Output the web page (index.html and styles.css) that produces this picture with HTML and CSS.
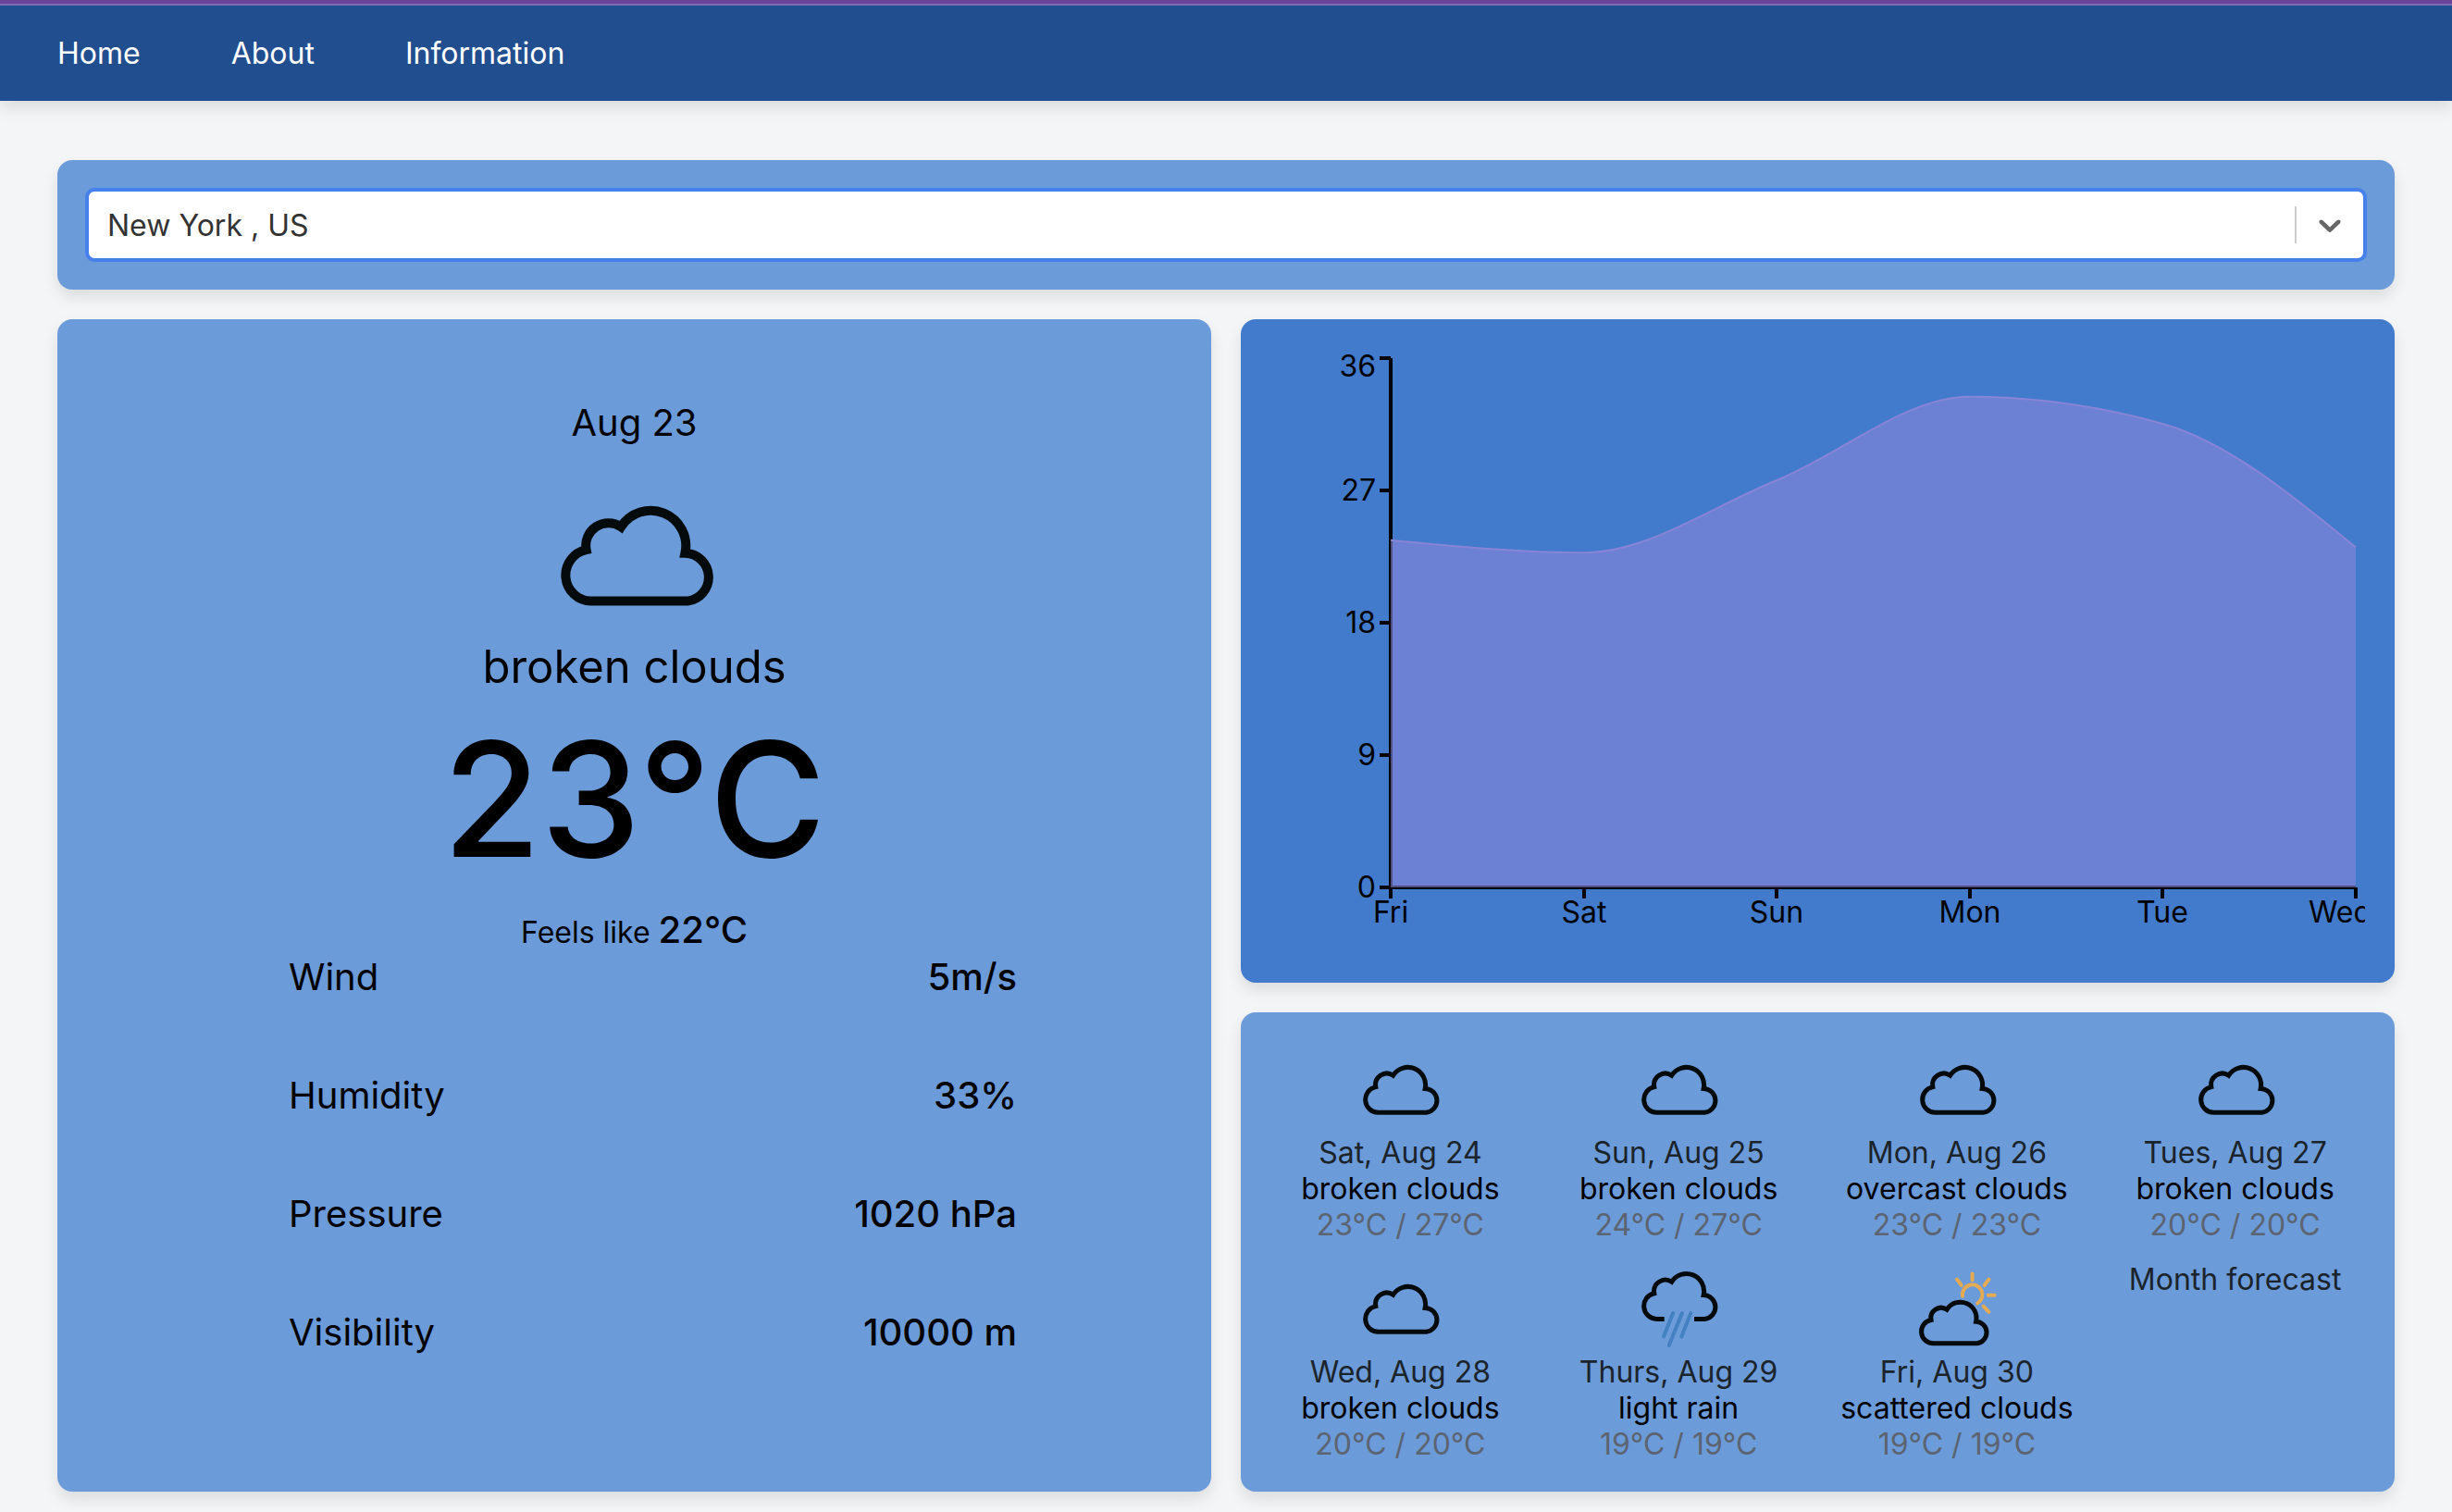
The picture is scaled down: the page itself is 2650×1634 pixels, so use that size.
FILE: index.html
```html
<!DOCTYPE html>
<html lang="en">
<head>
<meta charset="utf-8">
<title>Weather</title>
<meta name="viewport" content="width=device-width, initial-scale=1">
<link rel="stylesheet" href="styles.css">
</head>
<body>
<svg class="sprite" aria-hidden="true">
  <defs>
    <symbol id="icon-cloud" viewBox="0 0 100 100">
      <path class="cloud-line" d="M26.4 76.3A14 14 0 0 1 23.8 48.6A12.2 12.2 0 0 1 42.6 36.2A19 19 0 0 1 77.2 50.4A13 13 0 0 1 78.5 76.3Z"/>
    </symbol>
    <symbol id="icon-rain" viewBox="0 0 100 100">
      <path class="cloud-line" d="M34.7 62.4H26.4A14 14 0 0 1 23.8 34.7A12.2 12.2 0 0 1 42.6 22.3A19 19 0 0 1 77.2 36.5A13 13 0 0 1 78.5 62.4H67"/>
      <path class="rain-line" d="M44.1 56L34 81.5M53.9 56L39.7 91M63.3 56L53.3 81.5"/>
    </symbol>
    <symbol id="icon-cloud-sun" viewBox="0 0 100 100">
      <path class="sun-line" d="M56 37.8A10.8 10.8 0 1 1 72.2 45.4M66.6 13.5V20.2M50 19.6L54.7 25.8M84.4 19.6L79.6 26M83.8 36.8H90.6M78.6 48.6L84.4 54.8"/>
      <path class="cloud-line" d="M24.3 88.7A12.7 12.7 0 0 1 22 63.5A11.1 11.1 0 0 1 39.1 52.2A17.3 17.3 0 0 1 70.6 65.2A11.8 11.8 0 0 1 71.7 88.7Z"/>
    </symbol>
  </defs>
</svg>

<header class="topbar">
  <nav class="nav">
    <a href="#home">Home</a>
    <a href="#about">About</a>
    <a href="#information">Information</a>
  </nav>
</header>

<main class="dashboard">
  <section class="card search">
    <div class="picker">
      <select class="picker-select" aria-label="City">
        <option selected>New York , US</option>
      </select>
      <svg class="picker-arrow" viewBox="0 0 20 20" aria-hidden="true"><path d="M4.516 7.548c0.436-0.446 1.043-0.481 1.576 0l3.908 3.747 3.908-3.747c0.533-0.481 1.141-0.446 1.574 0 0.436 0.445 0.408 1.197 0 1.615-0.406 0.418-4.695 4.502-4.695 4.502-0.217 0.223-0.502 0.335-0.787 0.335s-0.57-0.112-0.789-0.335c0 0-4.287-4.084-4.695-4.502s-0.436-1.17 0-1.615z"/></svg>
    </div>
  </section>

  <section class="card today">
    <p class="today-date">Aug 23</p>
    <svg class="today-icon" aria-hidden="true"><use href="#icon-cloud"/></svg>
    <p class="today-desc">broken clouds</p>
    <p class="today-temp">23°C</p>
    <p class="today-feels">Feels like <strong>22°C</strong></p>
    <dl class="details">
      <div class="detail"><dt>Wind</dt><dd>5m/s</dd></div>
      <div class="detail"><dt>Humidity</dt><dd>33%</dd></div>
      <div class="detail"><dt>Pressure</dt><dd>1020 hPa</dd></div>
      <div class="detail"><dt>Visibility</dt><dd>10000 m</dd></div>
    </dl>
  </section>

  <div class="side">
    <section class="card chart-card">
      <svg class="chart" viewBox="0 0 1183 653" role="img" aria-label="Temperature by day">
        <path class="axis" d="M130 10V582M118 10H130M118 153H130M118 296H130M118 439H130M118 582H130"/>
        <path class="axis" d="M130 582H1173M130 582V594M339 582V594M547 582V594M756 582V594M964 582V594M1173 582V594"/>
        <path class="area" d="M130 206.7C199.5 213.5 269.1 220.3 338.6 220.3C408.1 220.3 477.7 170.1 547.2 142C616.7 113.9 686.3 51.7 755.8 51.7C825.3 51.7 894.9 61.5 964.4 81C1033.9 100.5 1103.5 157.5 1173 214.5V582H130Z"/>
        <path class="curve" d="M130 206.7C199.5 213.5 269.1 220.3 338.6 220.3C408.1 220.3 477.7 170.1 547.2 142C616.7 113.9 686.3 51.7 755.8 51.7C825.3 51.7 894.9 61.5 964.4 81C1033.9 100.5 1103.5 157.5 1173 214.5"/>
        <g class="ticks-y">
          <text x="114" y="30">36</text>
          <text x="114" y="164">27</text>
          <text x="114" y="307">18</text>
          <text x="114" y="450">9</text>
          <text x="114" y="593">0</text>
        </g>
        <g class="ticks-x">
          <text x="130" y="620">Fri</text>
          <text x="339" y="620">Sat</text>
          <text x="547" y="620">Sun</text>
          <text x="756" y="620">Mon</text>
          <text x="964" y="620">Tue</text>
          <text x="1156" y="620">Wed</text>
        </g>
      </svg>
    </section>

    <section class="card forecast">
      <article class="day">
        <svg class="day-icon" aria-hidden="true"><use href="#icon-cloud"/></svg>
        <p class="day-date">Sat, Aug 24</p><p>broken clouds</p><p class="day-temp">23°C / 27°C</p>
      </article>
      <article class="day">
        <svg class="day-icon" aria-hidden="true"><use href="#icon-cloud"/></svg>
        <p class="day-date">Sun, Aug 25</p><p>broken clouds</p><p class="day-temp">24°C / 27°C</p>
      </article>
      <article class="day">
        <svg class="day-icon" aria-hidden="true"><use href="#icon-cloud"/></svg>
        <p class="day-date">Mon, Aug 26</p><p>overcast clouds</p><p class="day-temp">23°C / 23°C</p>
      </article>
      <article class="day">
        <svg class="day-icon" aria-hidden="true"><use href="#icon-cloud"/></svg>
        <p class="day-date">Tues, Aug 27</p><p>broken clouds</p><p class="day-temp">20°C / 20°C</p>
      </article>
      <article class="day">
        <svg class="day-icon" aria-hidden="true"><use href="#icon-cloud"/></svg>
        <p class="day-date">Wed, Aug 28</p><p>broken clouds</p><p class="day-temp">20°C / 20°C</p>
      </article>
      <article class="day">
        <svg class="day-icon" aria-hidden="true"><use href="#icon-rain"/></svg>
        <p class="day-date">Thurs, Aug 29</p><p>light rain</p><p class="day-temp">19°C / 19°C</p>
      </article>
      <article class="day">
        <svg class="day-icon" aria-hidden="true"><use href="#icon-cloud-sun"/></svg>
        <p class="day-date">Fri, Aug 30</p><p>scattered clouds</p><p class="day-temp">19°C / 19°C</p>
      </article>
      <a class="month-link" href="#month">Month forecast</a>
    </section>
  </div>
</main>
</body>
</html>
```
FILE: styles.css
```css
* {
  box-sizing: border-box;
  margin: 0;
}

body {
  background: #f4f5f7;
  color: #000;
  font-family: Inter, "Liberation Sans", sans-serif;
  font-size: 32px;
  line-height: 39px;
}

a {
  color: inherit;
  text-decoration: none;
}

.sprite {
  display: block;
  width: 0;
  height: 0;
}

.cloud-line,
.rain-line,
.sun-line {
  fill: none;
  stroke: #050a0c;
  stroke-width: 5;
}

.rain-line {
  stroke: #4381c1;
  stroke-width: 4;
  stroke-linecap: round;
}

.sun-line {
  stroke: #e5ab54;
  stroke-width: 4;
  stroke-linecap: round;
}

.topbar {
  border-top: 4px solid #6b439a;
  background: #214e8f;
  box-shadow: 0 8px 16px rgba(0, 0, 0, 0.1);
}

.nav {
  display: flex;
  gap: 98px;
  padding: 32px 62px;
  border-top: 2px solid #7b6cb4;
  color: #fff;
}

.dashboard {
  display: grid;
  grid-template-columns: repeat(2, minmax(0, 1fr));
  gap: 32px;
  padding: 64px 62px 20px;
}

.card {
  padding: 32px;
  border-radius: 16px;
  background: #6c9bd9;
  box-shadow: 0 8px 16px rgba(0, 0, 0, 0.1);
}

.search {
  grid-column: 1 / -1;
}

.picker {
  display: grid;
  grid-template-columns: minmax(0, 1fr) 74px;
  align-items: center;
  border: 2px solid #4680eb;
  border-radius: 8px;
  background: #fff;
  box-shadow: 0 0 0 2px #4680eb;
}

.picker-select {
  grid-area: 1 / 1 / 2 / 3;
  height: 72px;
  padding: 0 20px;
  border: 0;
  outline: 0;
  appearance: none;
  background: transparent;
  color: #333;
  font: inherit;
}

.picker-arrow {
  grid-area: 1 / 2 / 2 / 3;
  width: 74px;
  height: 40px;
  border-left: 2px solid #ccc;
  fill: #666;
  pointer-events: none;
}

.today {
  display: flex;
  flex-direction: column;
  align-items: center;
  padding-top: 88px;
}

.today-date {
  font-size: 40px;
  line-height: 48px;
}

.today-icon {
  width: 200px;
  height: 200px;
  margin-top: 16px;
}

.today-desc {
  font-size: 49px;
  line-height: 48px;
}

.today-temp {
  margin: 32px 0;
  font-size: 172px;
  font-weight: 500;
  line-height: 172px;
}

.today-feels {
  line-height: 48px;
}

.today-feels strong {
  font-size: 40px;
  font-weight: 500;
}

.details {
  display: flex;
  flex-direction: column;
  align-self: stretch;
  gap: 80px;
  padding: 0 178px 0 218px;
  font-size: 40px;
  line-height: 48px;
}

.detail {
  display: flex;
  justify-content: space-between;
}

.detail dd {
  font-weight: 500;
}

.side {
  display: flex;
  flex-direction: column;
  gap: 32px;
}

.chart-card {
  background: #437bcc;
}

.chart {
  display: block;
  width: 100%;
  overflow: hidden;
}

.axis {
  fill: none;
  stroke: #000;
  stroke-width: 4;
}

.area {
  fill: #8884d8;
  fill-opacity: 0.6;
}

.curve {
  fill: none;
  stroke: #8884d8;
  stroke-width: 2;
}

.ticks-y {
  text-anchor: end;
}

.ticks-x {
  text-anchor: middle;
}

.forecast {
  display: grid;
  grid-template-columns: repeat(4, minmax(0, 1fr));
  gap: 20px;
  text-align: center;
}

.day-icon {
  display: block;
  width: 100px;
  height: 100px;
  margin: 0 auto;
}

.day-date,
.month-link {
  color: #1b232b;
}

.day-temp {
  color: #5b6470;
}
```
